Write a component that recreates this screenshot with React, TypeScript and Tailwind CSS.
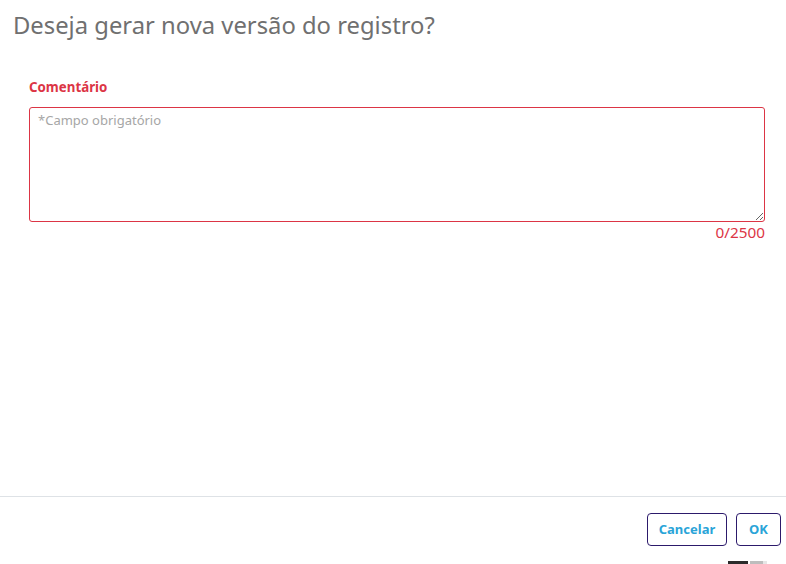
export default function App() {
  return (
    <div className="relative w-[786px] h-[564px] bg-white overflow-hidden font-['Noto_Sans',sans-serif]">
      <div className="flex flex-col h-full">
        <div className="h-[496px] flex flex-col">
          <h1 className="pl-[13px] pt-[9px] text-[23.8px] leading-[32px] text-[#707070] font-normal">
            Deseja gerar nova versão do registro?
          </h1>
          <div className="pl-[29px] pr-[21px] pt-[37px]">
            <label className="block text-[13.3px] leading-[18px] font-bold text-[#dc3545]">Comentário</label>
            <textarea
              className="mt-[11px] block w-full h-[115px] border border-[#dc3545] rounded-[3px] px-[8px] py-[2px] text-[13px] leading-[20px] text-[#333] placeholder:text-[#a6a6a6] outline-none resize-y"
              placeholder="*Campo obrigatório"
            />
            <div className="text-right text-[15.3px] leading-[18px] mt-[1px] text-[#dc3545]">0/2500</div>
          </div>
        </div>
        <div className="border-t border-[#dee2e6] flex justify-end gap-[9px] pr-[5px] pt-[16px]">
          <button className="h-[33px] w-[80px] rounded-[4px] border border-[#2c1a6b] text-[13px] font-bold text-[#2aa4d8]">
            Cancelar
          </button>
          <button className="h-[33px] w-[45px] rounded-[4px] border border-[#2c1a6b] text-[13px] font-bold text-[#2aa4d8]">
            OK
          </button>
        </div>
      </div>
      <div className="absolute left-[728px] bottom-0 flex h-[3px]">
        <div className="w-[20px] bg-[#2b2b2b]" />
        <div className="w-[2px]" />
        <div className="w-[13px] bg-[#bdbdbd]" />
        <div className="w-[4px] bg-[#e6e6e6]" />
      </div>
    </div>
  );
}
